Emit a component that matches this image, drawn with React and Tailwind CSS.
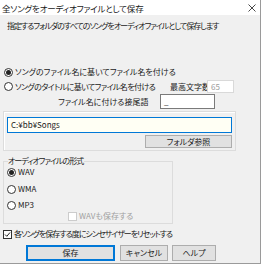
import React from 'react';

function Radio({ checked }) {
  return (
    <span className="w-[9px] h-[9px] rounded-full border border-[#333] bg-white flex items-center justify-center shrink-0">
      {checked && <span className="w-[5px] h-[5px] rounded-full bg-[#222]" />}
    </span>
  );
}

function Check({ checked, disabled }) {
  return (
    <span
      className={`w-[9px] h-[9px] border bg-white flex items-center justify-center shrink-0 ${
        disabled ? 'border-[#ccc]' : 'border-[#333]'
      }`}
    >
      {checked && (
        <svg width="7" height="7" viewBox="0 0 7 7">
          <path d="M1 3.5 L2.8 5.3 L6 1.5" fill="none" stroke="#222" strokeWidth="1" />
        </svg>
      )}
    </span>
  );
}

export default function App() {
  return (
    <div className="w-[262px] h-[266px] bg-white">
      <div className="w-[261px] h-[264px] bg-[#f0f0f0] border-r border-b border-[#9a9a9a] flex flex-col text-[8px] leading-[10px] text-[#1a1a1a] font-['Noto_Sans_CJK_JP',sans-serif] [font-feature-settings:'palt']">
        {/* title bar */}
        <div className="h-[15px] bg-white flex items-center justify-between pl-[2px] pr-[4px] shrink-0">
          <span className="text-[8.5px] tracking-[-0.2px]">全ソングをオーディオファイルとして保存</span>
          <svg width="8" height="8" viewBox="0 0 8 8">
            <path d="M0.5 0.5 L7.5 7.5 M7.5 0.5 L0.5 7.5" stroke="#333" strokeWidth="0.9" />
          </svg>
        </div>

        <div className="pl-[7px] mt-[6px] tracking-[-1px]">指定するフォルダのすべてのソングをオーディオファイルとして保存します</div>

        {/* naming options */}
        <div className="mt-[36px] pl-[4px] flex items-center gap-[2px] h-[10px]">
          <Radio checked />
          <span>ソングのファイル名に基いてファイル名を付ける</span>
        </div>
        <div className="mt-[3px] pl-[4px] flex items-center h-[13px]">
          <Radio />
          <span className="ml-[2px] tracking-[-0.6px]">ソングのタイトルに基いてファイル名を付ける</span>
          <span className="ml-auto w-[37px] overflow-hidden whitespace-nowrap">最高文字数</span>
          <div className="w-[27px] h-[13px] bg-white border border-[#d9d9d9] text-[#9a9a9a] pl-[3px] flex items-center mr-[26px]">
            65
          </div>
        </div>
        <div className="mt-[1px] flex items-center h-[15px] pl-[58px]">
          <span className="w-[102px]">ファイル名に付ける接尾語</span>
          <div className="w-[55px] h-[15px] bg-white border border-[#7a7a7a] pl-[3px] flex items-center">_</div>
        </div>

        {/* folder group */}
        <div className="mt-[2px] ml-[3px] w-[233px] h-[40px] border border-[#dcdcdc] shadow-[inset_1px_1px_0_#fff] px-[3px] pt-[5px] flex flex-col">
          <div className="h-[16px] bg-[#fffff4] border border-[#0078d7] pl-[3px] flex items-center">C:¥bb¥Songs</div>
          <div className="mt-[2px] self-end w-[87px] h-[13px] bg-[#e1e1e1] border border-[#adadad] flex items-center justify-center">
            フォルダ参照
          </div>
        </div>

        {/* format group */}
        <div className="mt-[10px] ml-[3px] w-[170px] h-[63px] border border-[#dcdcdc] relative flex flex-col pl-[3px] pt-[5px]">
          <span className="absolute -top-[6px] left-[4px] bg-[#f0f0f0] pr-[1px] tracking-[-1px]">オーディオファイルの形式</span>
          <div className="flex items-center gap-[2px] h-[10px]">
            <Radio checked />
            <span>WAV</span>
          </div>
          <div className="mt-[7px] flex items-center gap-[2px] h-[10px]">
            <Radio />
            <span>WMA</span>
          </div>
          <div className="mt-[6px] flex items-center gap-[2px] h-[10px]">
            <Radio />
            <span>MP3</span>
          </div>
          <div className="mt-[1px] ml-[61px] flex items-center gap-[2px] h-[10px] text-[#a0a0a0]">
            <Check disabled />
            <span>WAVも保存する</span>
          </div>
        </div>

        <div className="mt-[5px] pl-[3px] flex items-center gap-[2px] h-[10px]">
          <Check checked />
          <span className="tracking-[-1px]">各ソングを保存する度にシンセサイザーをリセットする</span>
        </div>

        {/* buttons */}
        <div className="mt-[6px] flex items-center h-[16px] pl-[26px]">
          <div className="w-[89px] h-[16px] bg-[#e1e1e1] border-2 border-[#0078d7] flex items-center justify-center">保存</div>
          <div className="ml-[5px] w-[48px] h-[16px] bg-[#e1e1e1] border border-[#adadad] flex items-center justify-center">キャンセル</div>
          <div className="ml-[4px] w-[44px] h-[16px] bg-[#e1e1e1] border border-[#adadad] flex items-center justify-center">ヘルプ</div>
        </div>
      </div>
    </div>
  );
}
